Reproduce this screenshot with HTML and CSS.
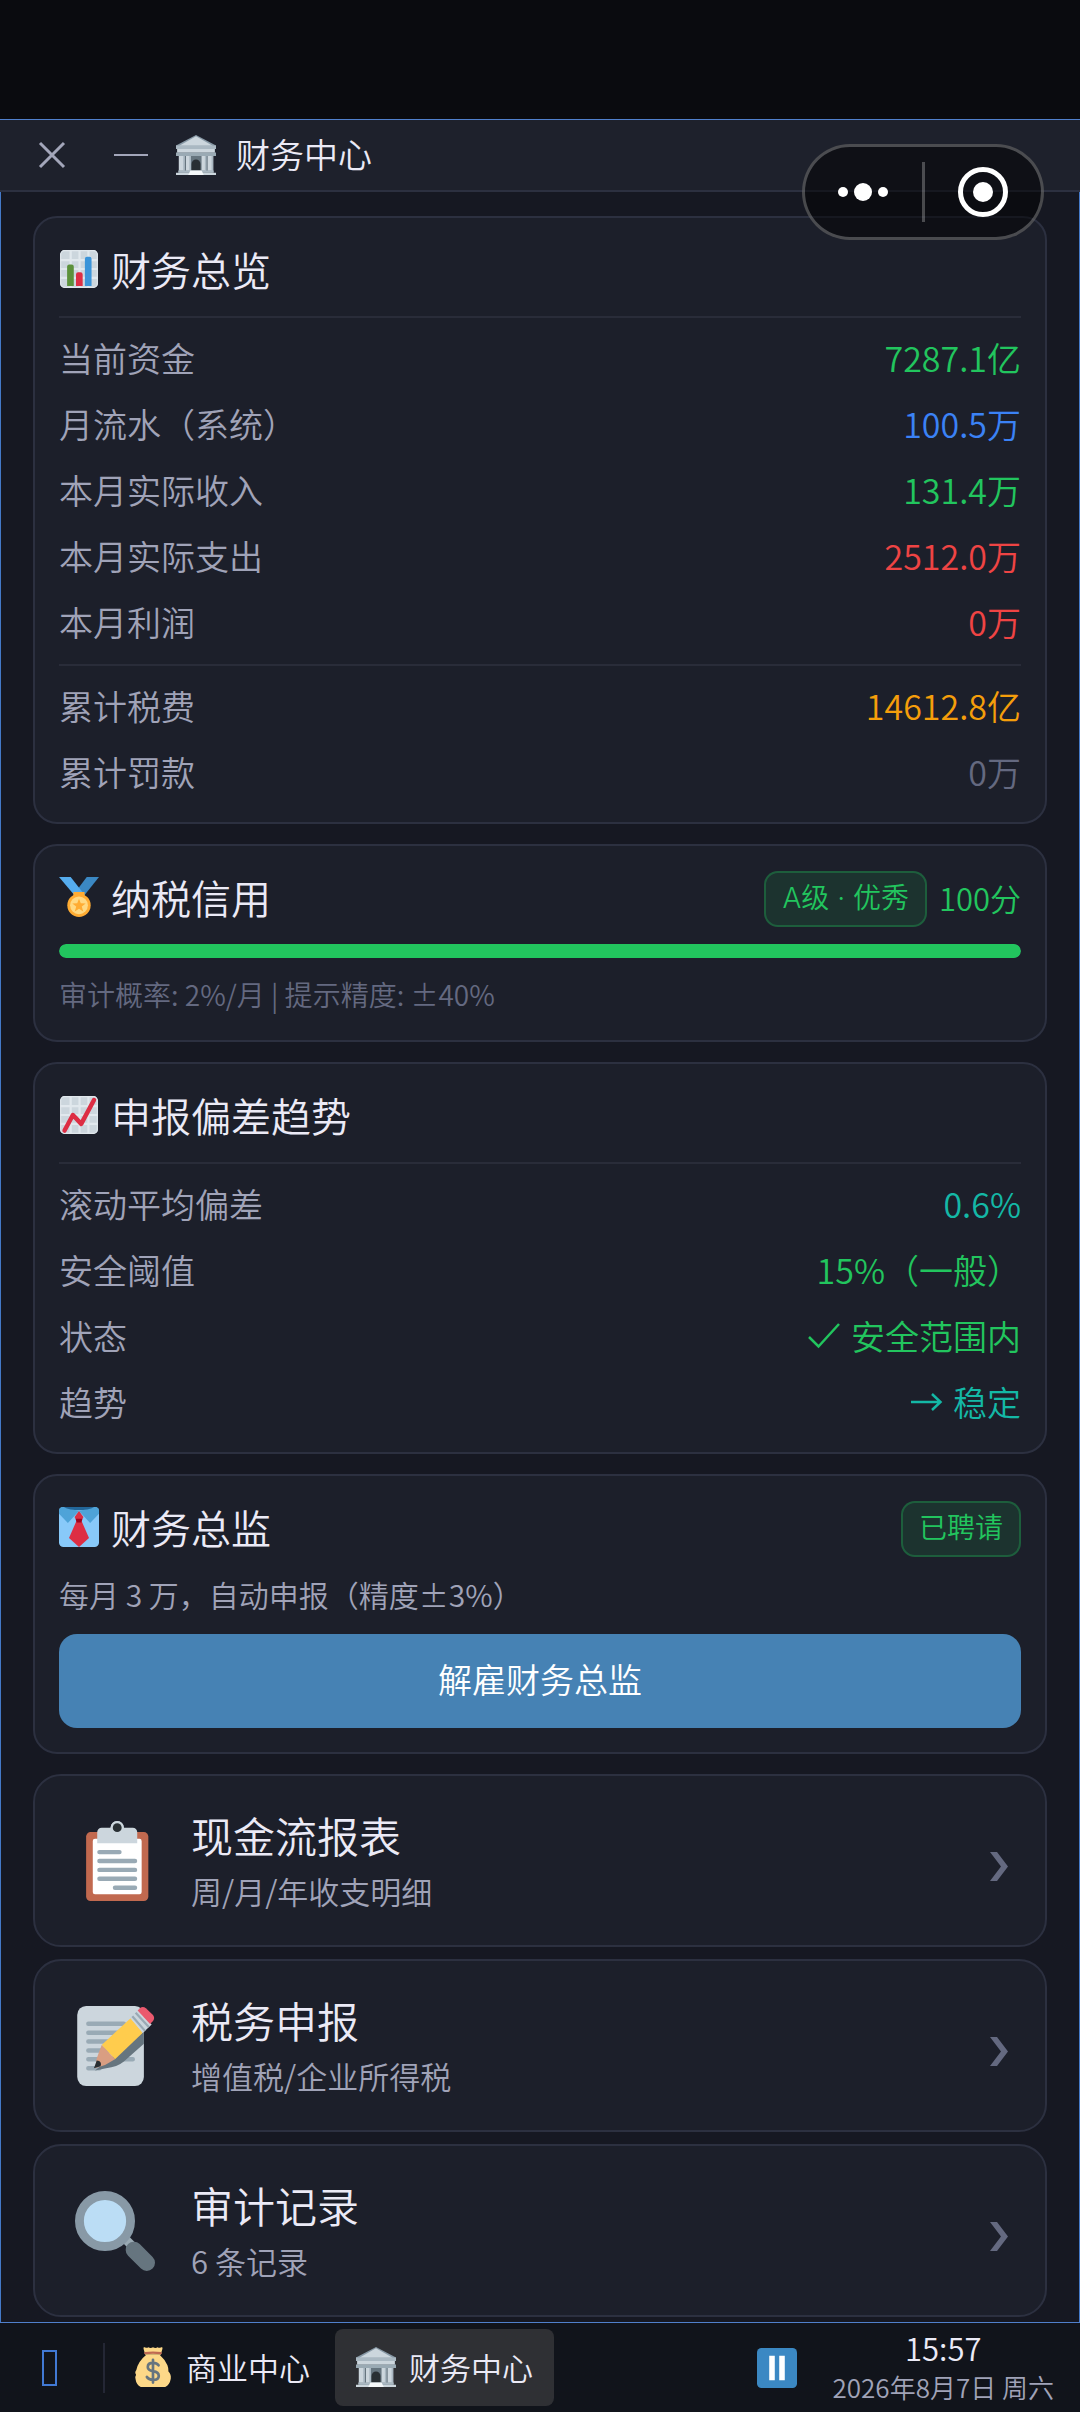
FILE: index.html
```
<!DOCTYPE html>
<html lang="zh-CN">
<head>
    <meta charset="UTF-8">
    <meta name="viewport" content="width=device-width, initial-scale=1.0">
    <title>财务中心</title>
    <link rel="stylesheet" href="styles.css">
</head>
<body>
    <!-- 图标定义 -->
    <svg class="defs" aria-hidden="true">
        <symbol id="i-bank" viewBox="0 0 36 36">
            <path d="M3 17h30v17H3z" fill="#66757f"/>
            <path d="M18 0 36 9.5v3H0v-3z" fill="#8899a6"/>
            <path d="M18 1.2 33 9.6H3z" fill="#ccd6dd"/>
            <path d="M0 9.5h36v3H0z" fill="#aab8c2"/>
            <path d="M1 12.5h34V16H1z" fill="#ccd6dd"/>
            <path d="M0 15.8h36v3H0z" fill="#9aaab4"/>
            <path d="M2.5 18.8h5v13.4h-5zM9 18.8h4v13.4H9zM23 18.8h4v13.4h-4zM28.500 18.800h5v13.400h-5z" fill="#ccd6dd"/>
            <path d="M6.500 18.800h1.500v13.400H6.500zM12 18.800h1.500v13.400H12zM26 18.800h1.500v13.400H26zM32 18.800h1.500v13.400H32z" fill="#aab8c2"/>
            <path d="M14 32.200V26a4 4 0 0 1 8 0v6.200z" fill="#292f33"/>
            <path d="M2 32h32v2H2z" fill="#aab8c2"/>
            <path d="M0 34h36v2H0z" fill="#ccd6dd"/>
            <path d="M13 32h10l2 4H11z" fill="#f5f8fa"/>
        </symbol>
        <symbol id="i-bars" viewBox="0 0 36 36">
            <rect x="1" y="1" width="34" height="34" rx="4" fill="#ccd6dd"/>
            <path d="M10.500 1v34M18.500 1v34M26.500 1v34M1 10h34M1 18h34M1 26h34" stroke="#e1e8ed" stroke-width="2"/>
            <rect x="1.500" y="1.500" width="33" height="33" rx="3.500" fill="none" stroke="#e1e8ed"/>
            <path d="M7.300 33.200V16a2 2 0 0 1 2-2h2a2 2 0 0 1 2 2v17.200z" fill="#5c913b"/>
            <path d="M15.300 33.200V23a2 2 0 0 1 2-2h2a2 2 0 0 1 2 2v10.200z" fill="#dd2e44"/>
            <path d="M23.300 33.200V9a2 2 0 0 1 2-2h2a2 2 0 0 1 2 2v24.200z" fill="#3b94d9"/>
        </symbol>
        <symbol id="i-medal" viewBox="0 0 36 36">
            <path d="M25 0 13 16l7 4L36 0z" fill="#3b88c3"/>
            <path d="M0 0h10.500L23 16l-7 3z" fill="#55acee"/>
            <path d="M13 13.500h10v5H13z" fill="#ffac33"/>
            <circle cx="18" cy="25.500" r="10.500" fill="#ffac33"/>
            <circle cx="18" cy="25.500" r="8" fill="#ffd983"/>
            <path d="m18 19.500 1.600 4.200 4.400.1-3.500 2.800 1.300 4.400-3.800-2.500-3.800 2.500 1.300-4.400-3.500-2.800 4.400-.1z" fill="#ffac33"/>
        </symbol>
        <symbol id="i-trend" viewBox="0 0 36 36">
            <rect x="1" y="1" width="34" height="34" rx="4" fill="#ccd6dd"/>
            <path d="M10.500 1v34M18.500 1v34M26.500 1v34M1 10h34M1 18h34M1 26h34" stroke="#e1e8ed" stroke-width="2"/>
            <rect x="1.500" y="1.500" width="33" height="33" rx="3.500" fill="none" stroke="#e1e8ed"/>
            <path d="m5 32 7.500-14 7.500 8L31.500 4.500" fill="none" stroke="#dd2e44" stroke-width="4" stroke-linecap="round" stroke-linejoin="round"/>
        </symbol>
        <symbol id="i-tie" viewBox="0 0 36 36">
            <rect width="36" height="36" rx="4" fill="#88c9f9"/>
            <path d="M3.500 0 18 3.500 8 14.500 0 6V3.500A3.500 3.500 0 0 1 3.500 0zM32.500 0 18 3.500l10 11L36 6V3.500A3.500 3.500 0 0 0 32.500 0z" fill="#4ea3d8"/>
            <path d="M4 0h28q-6 3-14 3T4 0z" fill="#226699"/>
            <path d="m18 3.500 4 5.500-2 4h-4l-2-4z" fill="#dd2e44"/>
            <path d="M15.500 13h5L27 28l-9 8-9-8z" fill="#dd2e44"/>
            <path d="M15 10.500h6l-.8 3.500h-4.400z" fill="#a0041e"/>
        </symbol>
        <symbol id="i-clipboard" viewBox="0 0 36 36">
            <rect x="5" y="5" width="28" height="31" rx="2" fill="#c1694f"/>
            <rect x="8" y="8" width="22" height="25" rx="1" fill="#fff"/>
            <path d="M10 10V5a2 2 0 0 1 2-2h4a3 3 0 0 1 6 0h4a2 2 0 0 1 2 2v5z" fill="#ccd6dd"/>
            <circle cx="19" cy="3" r="3" fill="#ccd6dd"/>
            <circle cx="19" cy="3" r="2" fill="#292f33"/>
            <path d="M11 14h9M11 18h16M11 22h16M11 26h16M18 30h9" stroke="#99aab5" stroke-width="2" stroke-linecap="round"/>
        </symbol>
        <symbol id="i-memo" viewBox="0 0 36 36">
            <rect x="1" width="30" height="36" rx="4" fill="#ccd6dd"/>
            <path d="M6 8h16M6 12h14M6 16h14M6 20h14M6 24h20M6 28h5" stroke="#99aab5" stroke-width="2" stroke-linecap="round"/>
            <path d="M31 11.500V17l-9 8q-3 2.500-8 3l-5 1z" fill="#66757f"/>
            <path d="M25 5.500 30.500 12 18 24l-6-6.500z" fill="#ffcc4d"/>
            <path d="m12 17.500 6 6.500-4.500 2.500L9 28l.8-4.500z" fill="#d99e82"/>
            <path d="M9.800 24.500q2.500.2 1.700 2.600L8.500 28z" fill="#292f33"/>
            <path d="m25 5.500 3.500-3.500 6 6.300-4 3.900z" fill="#ccd6dd"/>
            <path d="m25.800 4.600 5.700 6.600M27.300 3l5.900 6.500" stroke="#99aab5" stroke-width="1"/>
            <path d="m28.200 2 1-1q1.300-1 2.700 0l3.200 3q1 1.300 0 2.700l-1.300 1.400z" fill="#ea596e"/>
        </symbol>
        <symbol id="i-search" viewBox="0 0 36 36">
            <path d="m22 21 6 6" stroke="#9aaab4" stroke-width="4"/>
            <path d="m26.500 26.500 5.800 5.800" stroke="#66757f" stroke-width="7.400" stroke-linecap="round"/>
            <circle cx="13.500" cy="13.500" r="11.500" fill="#bbddf5" stroke="#8899a6" stroke-width="4"/>
        </symbol>
        <symbol id="i-money" viewBox="0 0 36 36">
            <path d="M11 7 9.500 1.500Q9 0 10.700.3q1.700 1 3.100-.1 2 1.200 4.200 0 2.200 1.200 4.200 0 1.400 1.100 3.100.1 1.700-.3 1.200 1.200L25 7z" fill="#fdd888"/>
            <path d="M12 7h12q4.500 4 7 9.500 1 2.500.9 5.500 2.600 2.500 2.100 6.500Q33 34 29 36H7Q3 34 2.300 29 1.500 27 2.800 25 1.200 22.800 3 20.800 4.500 13 12 7z" fill="#fdd888"/>
            <path d="M11 5.500q7-1 14 0" fill="none" stroke="#bf6952" stroke-width="2" stroke-linecap="round"/>
            <path d="M23 16.500q-1.500-2.200-5-2.200-4.700 0-4.700 3.700 0 3 4.700 3.700 5.200.8 5.200 4.300 0 3.500-5.200 3.500-4 0-5.500-2.500M18 11.500v20.500" fill="none" stroke="#67757f" stroke-width="2.400" stroke-linecap="round"/>
        </symbol>
        <symbol id="i-pause" viewBox="0 0 36 36">
            <rect width="36" height="36" rx="4" fill="#3b88c3"/>
            <path d="M11 7h5v22h-5zM20 7h5v22h-5z" fill="#fff"/>
        </symbol>
        <symbol id="i-chevron" viewBox="0 0 28 42">
            <path d="M5 12h7l11 14.500L12 41H5l11-14.500z" fill="currentColor"/>
        </symbol>
        <symbol id="i-check" viewBox="0 0 34 34">
            <path d="m2 18 9.500 9.500L32 5" fill="none" stroke="currentColor" stroke-width="2.500"/>
        </symbol>
        <symbol id="i-arrow" viewBox="0 0 34 34">
            <path d="M2 17h29M23 9l8.500 8-8.500 8" fill="none" stroke="currentColor" stroke-width="2.500"/>
        </symbol>
    </svg>

    <div class="status-space"></div>

    <div class="window">
        <header class="window-bar">
            <button class="bar-btn close-btn" aria-label="关闭">
                <svg width="28" height="28" viewBox="0 0 28 28"><path d="M2 2l24 24M26 2 2 26" stroke="currentColor" stroke-width="3"/></svg>
            </button>
            <button class="bar-btn min-btn" aria-label="最小化">
                <svg width="34" height="28" viewBox="0 0 34 28"><path d="M0 14h34" stroke="currentColor" stroke-width="2"/></svg>
            </button>
            <svg class="icon"><use href="#i-bank"/></svg>
            <h1 class="window-title">财务中心</h1>
        </header>

        <main class="content">
            <section class="card">
                <div class="card-head lined">
                    <h2><svg class="icon"><use href="#i-bars"/></svg>财务总览</h2>
                </div>
                <dl class="rows">
                    <div class="row"><dt>当前资金</dt><dd class="green">7287.1亿</dd></div>
                    <div class="row"><dt>月流水（系统）</dt><dd class="blue">100.5万</dd></div>
                    <div class="row"><dt>本月实际收入</dt><dd class="green">131.4万</dd></div>
                    <div class="row"><dt>本月实际支出</dt><dd class="red">2512.0万</dd></div>
                    <div class="row"><dt>本月利润</dt><dd class="red">0万</dd></div>
                </dl>
                <dl class="rows totals">
                    <div class="row"><dt>累计税费</dt><dd class="orange">14612.8亿</dd></div>
                    <div class="row"><dt>累计罚款</dt><dd class="muted">0万</dd></div>
                </dl>
            </section>

            <section class="card">
                <div class="card-head">
                    <h2><svg class="icon"><use href="#i-medal"/></svg>纳税信用</h2>
                    <div class="credit">
                        <span class="badge">A级 · 优秀</span>
                        <span class="score">100分</span>
                    </div>
                </div>
                <div class="bar" role="progressbar" aria-label="纳税信用" aria-valuenow="100">
                    <div class="bar-fill" style="width: 100%"></div>
                </div>
                <p class="note">审计概率: 2%/月 | 提示精度: ±40%</p>
            </section>

            <section class="card">
                <div class="card-head lined">
                    <h2><svg class="icon"><use href="#i-trend"/></svg>申报偏差趋势</h2>
                </div>
                <dl class="rows">
                    <div class="row"><dt>滚动平均偏差</dt><dd class="teal">0.6%</dd></div>
                    <div class="row"><dt>安全阈值</dt><dd class="green">15%（一般）</dd></div>
                    <div class="row"><dt>状态</dt><dd class="green"><svg class="mark"><use href="#i-check"/></svg>安全范围内</dd></div>
                    <div class="row"><dt>趋势</dt><dd class="teal"><svg class="mark"><use href="#i-arrow"/></svg>稳定</dd></div>
                </dl>
            </section>

            <section class="card">
                <div class="card-head">
                    <h2><svg class="icon"><use href="#i-tie"/></svg>财务总监</h2>
                    <span class="badge">已聘请</span>
                </div>
                <p class="desc">每月 3 万，自动申报（精度±3%）</p>
                <button class="main-btn">解雇财务总监</button>
            </section>

            <nav class="menu">
                <a class="menu-item" href="#">
                    <svg class="menu-icon"><use href="#i-clipboard"/></svg>
                    <span class="menu-text">
                        <span class="menu-title">现金流报表</span>
                        <span class="menu-sub">周/月/年收支明细</span>
                    </span>
                    <svg class="chevron"><use href="#i-chevron"/></svg>
                </a>
                <a class="menu-item" href="#">
                    <svg class="menu-icon"><use href="#i-memo"/></svg>
                    <span class="menu-text">
                        <span class="menu-title">税务申报</span>
                        <span class="menu-sub">增值税/企业所得税</span>
                    </span>
                    <svg class="chevron"><use href="#i-chevron"/></svg>
                </a>
                <a class="menu-item" href="#">
                    <svg class="menu-icon"><use href="#i-search"/></svg>
                    <span class="menu-text">
                        <span class="menu-title">审计记录</span>
                        <span class="menu-sub">6 条记录</span>
                    </span>
                    <svg class="chevron"><use href="#i-chevron"/></svg>
                </a>
            </nav>
        </main>
    </div>

    <footer class="taskbar">
        <button class="start-btn" aria-label="开始"><span class="start-box"></span></button>
        <button class="task"><svg class="icon"><use href="#i-money"/></svg>商业中心</button>
        <button class="task active"><svg class="icon"><use href="#i-bank"/></svg>财务中心</button>
        <button class="pause-btn" aria-label="暂停"><svg class="icon"><use href="#i-pause"/></svg></button>
        <div class="clock">
            <span class="time">15:57</span>
            <span class="date">2026年8月7日 周六</span>
        </div>
    </footer>

    <!-- 右上角悬浮胶囊 -->
    <div class="capsule">
        <button class="capsule-btn" aria-label="更多">
            <svg width="52" height="52" viewBox="0 0 52 52" fill="#fff"><circle cx="6" cy="26" r="5"/><circle cx="26" cy="26" r="9"/><circle cx="46" cy="26" r="5"/></svg>
        </button>
        <button class="capsule-btn" aria-label="退出">
            <svg width="52" height="52" viewBox="0 0 52 52"><circle cx="26" cy="26" r="22.500" fill="none" stroke="#fff" stroke-width="5"/><circle cx="26" cy="26" r="10" fill="#fff"/></svg>
        </button>
    </div>
</body>
</html>
```

FILE: styles.css
```
* {
    box-sizing: border-box;
    margin: 0;
    padding: 0;
}

body {
    display: flex;
    flex-direction: column;
    height: 100vh;
    background: #0a0b0f;
    color: #ebeaf6;
    font-family: "Noto Sans CJK SC", "Noto Sans", sans-serif;
    font-size: 34px;
    font-weight: 350;
}

button {
    border: none;
    background: none;
    color: inherit;
    font: inherit;
    cursor: pointer;
}

svg {
    display: block;
    flex-shrink: 0;
}

.defs {
    position: absolute;
    width: 0;
    height: 0;
}

.icon {
    width: 40px;
    height: 40px;
}

.status-space {
    height: 119px;
    flex-shrink: 0;
}

/* 窗口 */
.window {
    flex: 1;
    min-height: 0;
    display: flex;
    flex-direction: column;
    border-top: 1px solid #5080cc;
    border-bottom: 1px solid #5080cc;
    background: #161822;
}

.window-bar {
    display: flex;
    align-items: center;
    height: 72px;
    flex-shrink: 0;
    padding-left: 38px;
    background: #1e212c;
    border-bottom: 2px solid #2c3040;
}

.bar-btn {
    color: #a3a6ba;
}

.min-btn {
    margin: 0 28px 0 48px;
}

.window-title {
    margin-left: 20px;
    padding-bottom: 2px;
    font-size: 34px;
    font-weight: inherit;
    line-height: 48px;
}

.content {
    flex: 1;
    min-height: 0;
    overflow: hidden;
    padding: 24px 32px 0;
    border-left: 1px solid #4479c8;
    border-right: 1px solid #4479c8;
}

/* 卡片 */
.card {
    display: flex;
    flex-direction: column;
    gap: 16px;
    margin-bottom: 20px;
    padding: 24px;
    background: #1c1f2a;
    border: 2px solid #2c3040;
    border-radius: 24px;
}

.card-head {
    display: flex;
    align-items: center;
    justify-content: space-between;
}

.card-head.lined {
    padding-bottom: 16px;
    border-bottom: 2px solid #292c39;
}

.card-head h2 {
    display: flex;
    align-items: center;
    gap: 12px;
    padding-bottom: 4px;
    font-size: 40px;
    font-weight: inherit;
    line-height: 54px;
}

.rows {
    display: flex;
    flex-direction: column;
    gap: 16px;
}

.totals {
    padding-top: 16px;
    border-top: 2px solid #292c39;
}

.row {
    display: flex;
    justify-content: space-between;
    padding-bottom: 2px;
    line-height: 48px;
}

.row dt {
    color: #a0a3b8;
}

.row dd {
    display: flex;
    align-items: center;
    gap: 10px;
}

.mark {
    width: 34px;
    height: 34px;
}

.green { color: #22c55e; }
.blue { color: #3b82f6; }
.red { color: #ef4444; }
.orange { color: #f59e0b; }
.teal { color: #14b8a6; }
.muted { color: #646980; }

.credit {
    display: flex;
    align-items: center;
    gap: 12px;
}

.badge {
    padding: 4px 16px 6px;
    border: 2px solid rgba(34, 197, 94, 0.3);
    border-radius: 14px;
    background: rgba(34, 197, 94, 0.12);
    color: #22c55e;
    font-family: Inter, "Noto Sans CJK SC", sans-serif;
    font-size: 28px;
    line-height: 42px;
}

.score {
    padding-bottom: 4px;
    color: #22c55e;
    font-size: 31px;
}

.bar {
    height: 14px;
    border-radius: 7px;
    background: #2c3040;
    overflow: hidden;
}

.bar-fill {
    height: 100%;
    border-radius: 7px;
    background: #22c55e;
}

.note {
    padding-bottom: 2px;
    color: #646980;
    font-size: 28px;
    line-height: 40px;
}

.desc {
    padding-bottom: 4px;
    color: #a0a3b8;
    font-size: 30px;
    line-height: 40px;
}

.main-btn {
    padding: 21px 24px 25px;
    border-radius: 18px;
    background: #4682b4;
    color: #fff;
    line-height: 48px;
}

/* 菜单 */
.menu {
    display: flex;
    flex-direction: column;
    gap: 12px;
}

.menu-item {
    display: flex;
    align-items: center;
    gap: 28px;
    padding: 32px;
    border: 2px solid #2c3040;
    border-radius: 28px;
    background: #1c1f2a;
    color: inherit;
    text-decoration: none;
}

.menu-icon {
    width: 96px;
    height: 80px;
}

.menu-text {
    display: flex;
    flex: 1;
    flex-direction: column;
    gap: 6px;
}

.menu-title {
    font-size: 42px;
    line-height: 54px;
}

.menu-sub {
    color: #a0a3b8;
    font-size: 31px;
    line-height: 45px;
}

.chevron {
    width: 28px;
    height: 42px;
    color: #646980;
}

/* 任务栏 */
.taskbar {
    display: flex;
    align-items: center;
    height: 89px;
    flex-shrink: 0;
    padding-right: 26px;
    background: #11141b;
}

.start-btn {
    display: flex;
    justify-content: center;
    align-items: center;
    width: 105px;
    height: 50px;
    margin-right: 7px;
    padding-right: 4px;
    border-right: 2px solid #242735;
}

.start-box {
    width: 15px;
    height: 36px;
    border: 2px solid #4179d4;
}

.task {
    display: flex;
    align-items: center;
    gap: 13px;
    margin-right: 4px;
    padding: 15px 21px 17px;
    border-radius: 8px;
    font-size: 31px;
    line-height: 45px;
}

.task.active {
    background: #2f3034;
}

.pause-btn {
    margin-left: auto;
    margin-right: 36px;
}

.clock {
    display: flex;
    flex-direction: column;
    align-items: center;
}

.time {
    font-size: 31px;
    line-height: 38px;
}

.date {
    color: #a0a3b8;
    font-size: 26px;
    line-height: 40px;
}

/* 悬浮胶囊 */
.capsule {
    position: absolute;
    top: 144px;
    right: 36px;
    display: flex;
    align-items: center;
    width: 242px;
    height: 96px;
    border: 3px solid rgba(255, 255, 255, 0.25);
    border-radius: 48px;
    background: rgba(0, 0, 0, 0.5);
}

.capsule-btn {
    display: flex;
    flex: 1;
    align-items: center;
    justify-content: center;
    height: 60px;
}

.capsule-btn + .capsule-btn {
    border-left: 3px solid rgba(255, 255, 255, 0.25);
}
```
